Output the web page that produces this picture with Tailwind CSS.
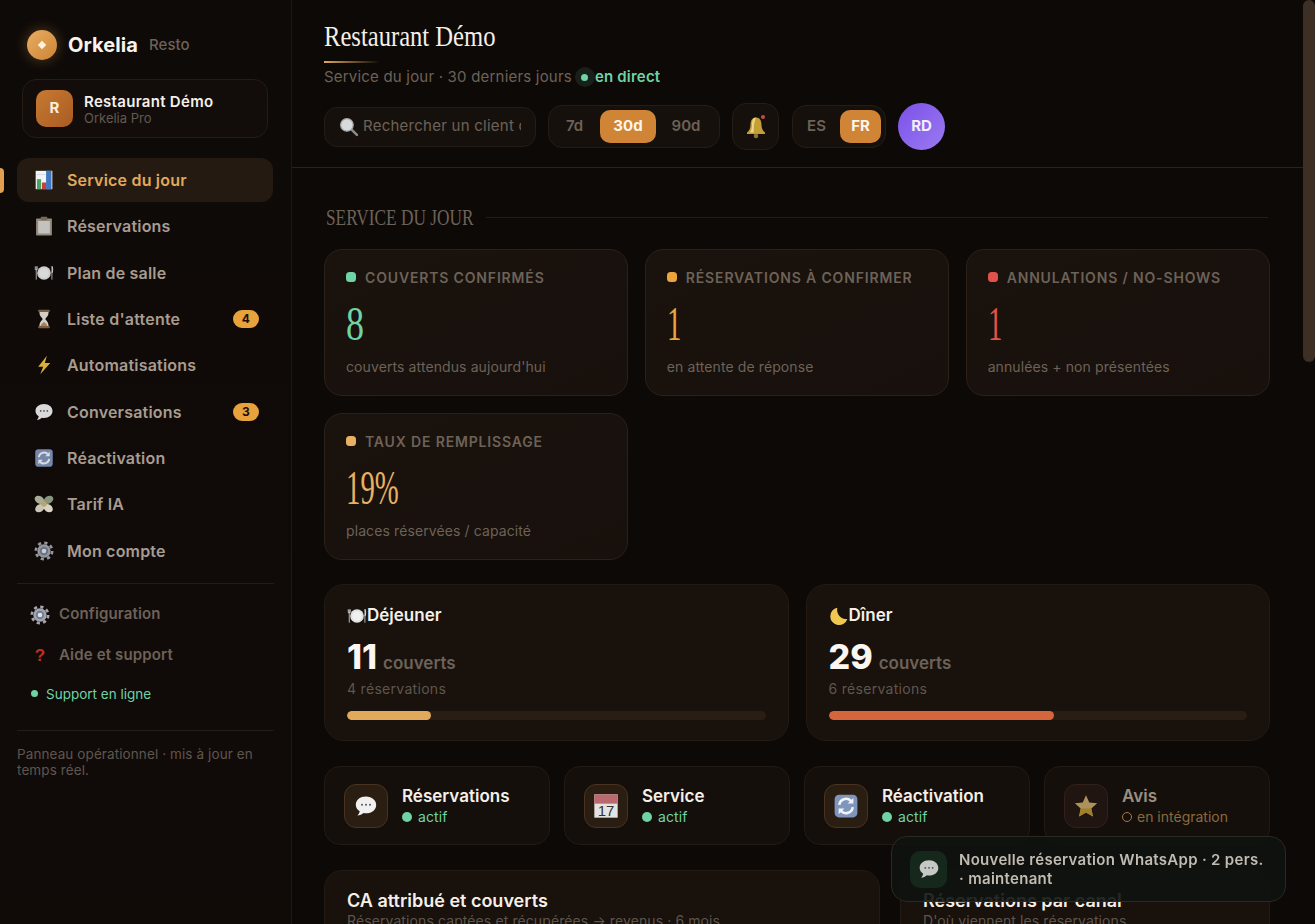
<!DOCTYPE html>
<html lang="fr">
<head>
<meta charset="UTF-8">
<meta name="viewport" content="width=device-width, initial-scale=1.0">
<title>Orkelia Resto</title>
<script src="https://cdn.jsdelivr.net/npm/@tailwindcss/browser@4"></script>
</head>
<body class="h-screen overflow-hidden flex bg-[#0d0906] font-['Inter',sans-serif] text-[#f5efe8]">

<!-- shared icons -->
<svg class="hidden">
  <symbol id="i-chart" viewBox="0 0 24 24"><rect x="2" y="1" width="20" height="22" fill="#f1f3f5"/><rect x="14.5" y="1" width="6.5" height="22" fill="#3f78c4"/><rect x="3.5" y="11" width="5" height="12" fill="#4aa564"/><rect x="9.5" y="15" width="5" height="8" fill="#c9403a"/><rect x="15.5" y="5" width="4.500" height="18" fill="#3f78c4"/><rect x="3.500" y="5" width="10" height="1" fill="#cfd6de"/></symbol>
  <symbol id="i-clip" viewBox="0 0 24 24"><rect x="2.500" y="3" width="19" height="20.500" rx="1" fill="#a5978a"/><rect x="5" y="6" width="14" height="15" fill="#d8d6d2"/><rect x="8" y="1" width="8" height="4" rx="1" fill="#837566"/></symbol>
  <symbol id="i-plate" viewBox="0 0 24 24"><circle cx="12" cy="12" r="8.200" fill="#e2e2e4"/><circle cx="12" cy="12" r="5.800" fill="#f0f0f1"/><path d="M1.500 4v4M2.700 4v16M3.900 4v4M1.500 8h2.400M21.500 4v16" stroke="#d8d8da" stroke-width="1" fill="none"/><path d="M21.500 4c1.200 1.500 1.200 6 0 8" stroke="#d8d8da" stroke-width="1.300" fill="none"/></symbol>
  <symbol id="i-glass" viewBox="0 0 24 24"><path d="M6.500 3.500h11c0 5-3 6.500-4 8.500 1 2 4 3.500 4 8.500h-11c0-5 3-6.500 4-8.500-1-2-4-3.500-4-8.500z" fill="#e9e4de"/><path d="M8 20.500c.5-2.500 2.500-4 4-5 1.500 1 3.500 2.500 4 5z" fill="#b98f61"/><rect x="5" y="1" width="14" height="2.600" rx="1" fill="#8b6848"/><rect x="5" y="20.400" width="14" height="2.600" rx="1" fill="#8b6848"/></symbol>
  <symbol id="i-bolt" viewBox="0 0 24 24"><path d="M15.500 1 5 14h6L7.500 23 19.500 9.500h-6.500z" fill="#f1c43f"/></symbol>
  <symbol id="i-chat" viewBox="0 0 24 24"><path d="M12 2.500C6.200 2.500 1.800 6 1.800 10.700c0 2.700 1.500 5 3.900 6.500-.3 1.600-1 3-2.200 4.300 2.300-.2 4.400-1.100 6-2.600.8.200 1.600.3 2.500.3 5.800 0 10.200-3.600 10.200-8.300S17.800 2.500 12 2.500z" fill="#f1f0f0"/><circle cx="8" cy="10.700" r="1" fill="#55565a"/><circle cx="12" cy="10.700" r="1" fill="#55565a"/><circle cx="16" cy="10.700" r="1" fill="#55565a"/></symbol>
  <symbol id="i-sync" viewBox="0 0 24 24"><rect x="1.500" y="1.500" width="21" height="21" rx="4" fill="#7f95bd"/><path d="M5.800 11a6.300 6.300 0 0 1 10.700-3.800" stroke="#f2f4f8" stroke-width="2.300" fill="none"/><path d="M18.800 4.500v5.300h-5.300z" fill="#f2f4f8"/><path d="M18.200 13a6.300 6.300 0 0 1-10.700 3.800" stroke="#f2f4f8" stroke-width="2.300" fill="none"/><path d="M5.200 19.500v-5.300h5.300z" fill="#f2f4f8"/></symbol>
  <symbol id="i-gear" viewBox="0 0 24 24"><circle cx="12" cy="12" r="9.800" fill="none" stroke="#a4a6ac" stroke-width="3.200" stroke-dasharray="3.850 3.850"/><circle cx="12" cy="12" r="8" fill="#a4a6ac"/><circle cx="12" cy="12" r="5" fill="#6f7d96"/><circle cx="12" cy="12" r="2.800" fill="#dfe2e8"/></symbol>
  <symbol id="i-wing" viewBox="0 0 24 24"><ellipse cx="6.500" cy="7" rx="6" ry="4.500" transform="rotate(30 6.500 7)" fill="#b9bea6"/><ellipse cx="17.500" cy="7" rx="6" ry="4.500" transform="rotate(-30 17.500 7)" fill="#98a58a"/><ellipse cx="7" cy="17" rx="6" ry="4.500" transform="rotate(-35 7 17)" fill="#dedbc9"/><ellipse cx="17" cy="17" rx="6" ry="4.500" transform="rotate(35 17 17)" fill="#efe9d8"/><circle cx="12" cy="12" r="3.200" fill="#c9b878"/></symbol>
  <symbol id="i-search" viewBox="0 0 24 24"><path d="m14.500 14.500 7 7" stroke="#8f8a84" stroke-width="3" stroke-linecap="round"/><circle cx="9.500" cy="9.500" r="7.500" fill="#d9dadc" stroke="#a9a9ab" stroke-width="1.500"/></symbol>
  <symbol id="i-bell" viewBox="0 0 24 24"><path d="M12 2.500c-4 0-5.500 3.500-5.500 7.500 0 3.500-1.500 6-3.500 7.500v1.500h18v-1.500c-2-1.500-3.500-4-3.500-7.500 0-4-1.500-7.500-5.500-7.500z" fill="#c49f38"/><path d="M12 2.500c-3 0-4 3.500-4 7.500 0 3.500-1 6-2 7.500h4c-.5-3-.5-9 2-15z" fill="#ecd882"/><circle cx="12" cy="21" r="2.300" fill="#8f7430"/></symbol>
  <symbol id="i-cal" viewBox="0 0 24 24"><rect x="2" y="2" width="20" height="20" fill="#e4e3e3"/><rect x="2" y="2" width="20" height="8" fill="#b96a6e"/></symbol>
  <symbol id="i-star" viewBox="0 0 24 24"><path d="m12 2 3 6.700 7.300.8-5.400 4.900 1.500 7.200L12 18l-6.400 3.600 1.500-7.200L1.700 9.500 9 8.700z" fill="#c4aa68"/><path d="M12 18l-6.400 3.600 1.500-7.200h9.800l1.500 7.200z" fill="#b9922f"/></symbol>
  <symbol id="i-moon" viewBox="0 0 24 24"><path d="M10 2a10.500 10.500 0 1 0 12 13.500A11 11 0 0 1 10 2z" fill="#f0c850"/></symbol>
</svg>

<!-- Sidebar -->
<aside class="w-[292px] shrink-0 h-full border-r border-[#1f1812] bg-gradient-to-b from-[#0e0a08] to-[#110b08] flex flex-col">
  <div class="h-[79px] pl-[27px] pt-[30px] flex items-start">
    <div class="w-[30px] h-[30px] rounded-full bg-gradient-to-br from-[#e8ad62] to-[#cc8436] shadow-[0_0_14px_rgba(224,160,80,0.35)] flex items-center justify-center"><span class="w-[6px] h-[6px] rotate-45 bg-[#fdf1dd]"></span></div>
    <span class="ml-[11px] text-[20px] leading-[30px] font-bold tracking-[.1px] text-[#f8f3ec]">Orkelia</span>
    <span class="ml-[11px] text-[15px] leading-[30px] font-medium text-[#6d6258]">Resto</span>
  </div>
  <div class="mx-[22px] h-[59px] w-[246px] rounded-[14px] border border-[#241c15] bg-[#120d0a] flex items-center pl-[13px] gap-[11px]">
    <div class="w-[37px] h-[37px] rounded-[10px] bg-gradient-to-br from-[#c87a32] to-[#a85c22] flex items-center justify-center text-[15px] font-bold text-[#fbeedd]">R</div>
    <div class="pt-[1px]">
      <div class="text-[15px] leading-[17px] font-semibold tracking-[.3px] text-[#f5efe8]">Restaurant Démo</div>
      <div class="text-[13px] leading-[16px] text-[#625950]">Orkelia Pro</div>
    </div>
  </div>

  <nav class="relative mt-[20px] mx-[17px] w-[256px] flex flex-col gap-[2.330px] text-[16px] font-semibold tracking-[.2px] text-[#a89c90]">
    <div class="absolute -left-[17px] top-[10px] w-[4px] h-[25px] rounded-r bg-[#e0a050]"></div>
    <a class="h-[44px] rounded-[12px] bg-[#241a12] flex items-center pl-[17px] gap-[13px] text-[#e0a95c]"><svg class="w-[20px] h-[20px]"><use href="#i-chart"/></svg>Service du jour</a>
    <a class="h-[44px] flex items-center pl-[17px] gap-[13px]"><svg class="w-[20px] h-[20px] opacity-90"><use href="#i-clip"/></svg>Réservations</a>
    <a class="h-[44px] flex items-center pl-[17px] gap-[13px]"><svg class="w-[20px] h-[20px] opacity-90"><use href="#i-plate"/></svg>Plan de salle</a>
    <a class="h-[44px] flex items-center pl-[17px] gap-[13px]"><svg class="w-[20px] h-[20px] opacity-90"><use href="#i-glass"/></svg>Liste d'attente<span class="ml-auto mr-[14px] w-[26px] h-[18px] rounded-full bg-[#e8a23c] flex items-center justify-center text-[12px] font-bold text-[#1a1008]">4</span></a>
    <a class="h-[44px] flex items-center pl-[17px] gap-[13px]"><svg class="w-[20px] h-[20px] opacity-90"><use href="#i-bolt"/></svg>Automatisations</a>
    <a class="h-[44px] flex items-center pl-[17px] gap-[13px]"><svg class="w-[20px] h-[20px] opacity-90"><use href="#i-chat"/></svg>Conversations<span class="ml-auto mr-[14px] w-[26px] h-[18px] rounded-full bg-[#e8a23c] flex items-center justify-center text-[12px] font-bold text-[#1a1008]">3</span></a>
    <a class="h-[44px] flex items-center pl-[17px] gap-[13px]"><svg class="w-[20px] h-[20px] opacity-90"><use href="#i-sync"/></svg>Réactivation</a>
    <a class="h-[44px] flex items-center pl-[17px] gap-[13px]"><svg class="w-[20px] h-[20px] opacity-90"><use href="#i-wing"/></svg>Tarif IA</a>
    <a class="h-[44px] flex items-center pl-[17px] gap-[13px]"><svg class="w-[20px] h-[20px] opacity-90"><use href="#i-gear"/></svg>Mon compte</a>
  </nav>

  <div class="mx-[17px] mt-[10px] border-t border-[#241c15] pl-[13px] text-[15px] font-semibold tracking-[.15px] text-[#6d6258]">
    <div class="mt-[21px] h-[20px] flex items-center gap-[9px]"><svg class="w-[20px] h-[20px]"><use href="#i-gear"/></svg>Configuration</div>
    <div class="mt-[21px] h-[20px] flex items-center gap-[9px]"><span class="w-[20px] text-center text-[17px] font-bold text-[#c22f22] font-['Liberation_Sans',sans-serif]">?</span>Aide et support</div>
    <div class="mt-[18px] h-[20px] flex items-center gap-[8px] text-[13.500px] font-normal tracking-normal text-[#6fd3a5]"><span class="w-[7px] h-[7px] ml-[1px] rounded-full bg-[#6fd3a5]"></span>Support en ligne</div>
  </div>
  <div class="mx-[17px] mt-[26px] pt-[15px] border-t border-[#241c15] text-[13.500px] leading-[16px] tracking-[.1px] text-[#5f564d]">Panneau opérationnel · mis à jour en temps réel.</div>
</aside>

<!-- Main -->
<main class="flex-1 min-w-0 h-full overflow-hidden flex flex-col">
  <header class="h-[168px] shrink-0 border-b border-[#2b231b] pl-[32px]">
    <div class="pt-[19px] h-[60px]">
      <h1 class="font-['Liberation_Serif',serif] text-[30px] leading-[34px] text-[#f5efe8] inline-block origin-left scale-x-[.82] whitespace-nowrap">Restaurant Démo</h1>
      <div class="mt-[8px] w-[56px] h-[2px] bg-gradient-to-r from-[#e0a95c] to-transparent"></div>
    </div>
    <div class="mt-[7px] h-[20px] flex items-center text-[15px] tracking-[.2px] text-[#6d6258]">Service du jour · 30 derniers jours
      <span class="ml-[3px] w-[20px] h-[20px] rounded-full bg-[#182019] flex items-center justify-center"><span class="w-[7px] h-[7px] rounded-full bg-[#6fd3a5]"></span></span>
      <span class="font-semibold text-[#6fd3a5]">en direct</span>
    </div>
    <div class="mt-[16px] flex items-center h-[47px]">
      <div class="w-[212px] h-[40px] rounded-[13px] border border-[#241c15] bg-[#16100c] flex items-center pl-[14px] pr-[14px]">
        <svg class="w-[20px] h-[20px] shrink-0"><use href="#i-search"/></svg>
        <input type="text" placeholder="Rechercher un client ou un numéro" class="ml-[4px] min-w-0 flex-1 bg-transparent outline-none text-[15px] tracking-[.25px] placeholder:text-[#6d6258]">
      </div>
      <div class="ml-[12px] w-[172px] h-[43px] rounded-[14px] border border-[#241c15] bg-[#16100c] flex items-center pl-[4px] text-[15px] font-semibold text-[#6d6258]">
        <span class="w-[47px] pr-[4px] text-center">7d</span>
        <span class="w-[56px] h-[33px] rounded-[10px] bg-[#cf8436] flex items-center justify-center text-[#fdf6ec] font-bold">30d</span>
        <span class="w-[60px] text-center">90d</span>
      </div>
      <div class="ml-[12px] relative w-[47px] h-[47px] rounded-[14px] border border-[#241c15] bg-[#16100c] flex items-center justify-center">
        <svg class="w-[24px] h-[24px]"><use href="#i-bell"/></svg>
        <span class="absolute top-[11px] right-[13px] w-[4px] h-[4px] rounded-full bg-[#c8484a]"></span>
      </div>
      <div class="ml-[13px] w-[94px] h-[43px] rounded-[14px] border border-[#241c15] bg-[#16100c] flex items-center pl-[4px] text-[15px] font-semibold text-[#6d6258]">
        <span class="w-[43px] pr-[4px] text-center">ES</span>
        <span class="w-[41px] h-[33px] rounded-[10px] bg-[#cf8436] flex items-center justify-center text-[#fdf6ec] font-bold">FR</span>
      </div>
      <div class="ml-[12px] w-[47px] h-[47px] rounded-full bg-gradient-to-br from-[#7c4fe8] to-[#9a7af0] flex items-center justify-center text-[15px] font-bold text-[#f3edff]">RD</div>
    </div>
  </header>

  <section class="pl-[32px] pr-[33px] pt-[37px]">
    <div class="h-[24px] flex items-center">
      <h2 class="ml-[2px] w-[148px] shrink-0 font-['Liberation_Serif',serif] text-[24px] leading-[24px] text-[#6d6258] origin-left scale-x-[.72] whitespace-nowrap">SERVICE DU JOUR</h2>
      <div class="ml-[12px] mr-[2px] flex-1 h-[1px] bg-[#241c15]"></div>
    </div>

    <div class="mt-[20px] grid grid-cols-3 gap-x-[16.500px] gap-y-[17px]">
      <div class="h-[147px] rounded-[18px] border border-[#2b2118] bg-gradient-to-br from-[#19120d] to-[#17100c] pt-[19px] px-[21px]">
        <div class="h-[16px] flex items-center gap-[9px] text-[14px] font-semibold tracking-[.06em] text-[#6d6258] whitespace-nowrap"><span class="w-[10px] h-[10px] rounded-[3.500px] bg-[#6fd3a5]"></span>COUVERTS CONFIRMÉS</div>
        <div class="mt-[15px] h-[48px] font-['Liberation_Serif',serif] text-[48px] leading-[48px] text-[#6fd3a5] origin-left scale-x-[.75]">8</div>
        <div class="mt-[8px] text-[14px] tracking-[.1px] text-[#6d6258]">couverts attendus aujourd'hui</div>
      </div>
      <div class="h-[147px] rounded-[18px] border border-[#2b2118] bg-gradient-to-br from-[#19120d] to-[#17100c] pt-[19px] px-[21px]">
        <div class="h-[16px] flex items-center gap-[9px] text-[14px] font-semibold tracking-[.06em] text-[#6d6258] whitespace-nowrap"><span class="w-[10px] h-[10px] rounded-[3.500px] bg-[#eba53c]"></span>RÉSERVATIONS À CONFIRMER</div>
        <div class="mt-[15px] h-[48px] font-['Liberation_Serif',serif] text-[48px] leading-[48px] text-[#eba53c] origin-left scale-x-[.6]">1</div>
        <div class="mt-[8px] text-[14px] tracking-[.1px] text-[#6d6258]">en attente de réponse</div>
      </div>
      <div class="h-[147px] rounded-[18px] border border-[#2b2118] bg-gradient-to-br from-[#19120d] to-[#17100c] pt-[19px] px-[21px]">
        <div class="h-[16px] flex items-center gap-[9px] text-[14px] font-semibold tracking-[.06em] text-[#6d6258] whitespace-nowrap"><span class="w-[10px] h-[10px] rounded-[3.500px] bg-[#e0524a]"></span>ANNULATIONS / NO-SHOWS</div>
        <div class="mt-[15px] h-[48px] font-['Liberation_Serif',serif] text-[48px] leading-[48px] text-[#e0524a] origin-left scale-x-[.6]">1</div>
        <div class="mt-[8px] text-[14px] tracking-[.1px] text-[#6d6258]">annulées + non présentées</div>
      </div>
      <div class="h-[147px] rounded-[18px] border border-[#2b2118] bg-gradient-to-br from-[#19120d] to-[#17100c] pt-[19px] px-[21px]">
        <div class="h-[16px] flex items-center gap-[9px] text-[14px] font-semibold tracking-[.06em] text-[#6d6258] whitespace-nowrap"><span class="w-[10px] h-[10px] rounded-[3.500px] bg-[#e8b060]"></span>TAUX DE REMPLISSAGE</div>
        <div class="mt-[15px] h-[48px] font-['Liberation_Serif',serif] text-[48px] leading-[48px] text-[#e8b060] origin-left scale-x-[.6]">19%</div>
        <div class="mt-[8px] text-[14px] tracking-[.1px] text-[#6d6258]">places réservées / capacité</div>
      </div>
    </div>

    <div class="mt-[24px] grid grid-cols-2 gap-[17px]">
      <div class="h-[157px] rounded-[20px] border border-[#221a13] bg-[#18110c] pt-[21px] px-[22px]">
        <div class="h-[20px] flex items-center text-[17px] font-semibold text-[#f5efe8]"><svg class="w-[20px] h-[20px]"><use href="#i-plate"/></svg>Déjeuner</div>
        <div class="mt-[13px] h-[36px] flex items-baseline gap-[6px]"><span class="text-[34px] leading-[36px] font-extrabold text-[#fbf6ef]">11</span><span class="text-[17px] font-semibold text-[#6d6258]">couverts</span></div>
        <div class="mt-[4px] h-[20px] text-[14px] leading-[20px] text-[#5f564d] tracking-[.3px]">4 réservations</div>
        <div class="mt-[12px] h-[9px] rounded-full bg-[#2a1d14] overflow-hidden"><div class="h-full rounded-full bg-[#e0a95c]" style="width:20%"></div></div>
      </div>
      <div class="h-[157px] rounded-[20px] border border-[#221a13] bg-[#18110c] pt-[21px] px-[22px]">
        <div class="h-[20px] flex items-center text-[17px] font-semibold text-[#f5efe8]"><svg class="w-[20px] h-[20px]"><use href="#i-moon"/></svg>Dîner</div>
        <div class="mt-[13px] h-[36px] flex items-baseline gap-[6px]"><span class="text-[34px] leading-[36px] font-extrabold text-[#fbf6ef]">29</span><span class="text-[17px] font-semibold text-[#6d6258]">couverts</span></div>
        <div class="mt-[4px] h-[20px] text-[14px] leading-[20px] text-[#5f564d] tracking-[.3px]">6 réservations</div>
        <div class="mt-[12px] h-[9px] rounded-full bg-[#2a1d14] overflow-hidden"><div class="h-full rounded-full bg-[#d4653c]" style="width:54%"></div></div>
      </div>
    </div>

    <div class="mt-[25px] grid grid-cols-4 gap-[14px]">
      <div class="h-[79px] rounded-[16px] border border-[#221a13] bg-[#150f0b] flex items-center pl-[19px] gap-[14px]">
        <div class="w-[44px] h-[44px] rounded-[12px] border border-[#4a3320] bg-[#2a1d12] flex items-center justify-center"><svg class="w-[24px] h-[24px]"><use href="#i-chat"/></svg></div>
        <div><div class="text-[17px] leading-[22px] font-semibold text-[#f5efe8]">Réservations</div><div class="h-[20px] flex items-center gap-[6px] text-[14px] tracking-[.1px] text-[#6fd3a5]"><span class="w-[10px] h-[10px] rounded-full bg-[#6fd3a5]"></span>actif</div></div>
      </div>
      <div class="h-[79px] rounded-[16px] border border-[#221a13] bg-[#150f0b] flex items-center pl-[19px] gap-[14px]">
        <div class="relative w-[44px] h-[44px] rounded-[12px] border border-[#4a3320] bg-[#2a1d12] flex items-center justify-center"><svg class="w-[28px] h-[28px]"><use href="#i-cal"/></svg><span class="absolute left-0 right-0 top-[17px] text-center text-[15px] leading-[18px] font-['Liberation_Sans',sans-serif] text-[#333]">17</span></div>
        <div><div class="text-[17px] leading-[22px] font-semibold text-[#f5efe8]">Service</div><div class="h-[20px] flex items-center gap-[6px] text-[14px] tracking-[.1px] text-[#6fd3a5]"><span class="w-[10px] h-[10px] rounded-full bg-[#6fd3a5]"></span>actif</div></div>
      </div>
      <div class="h-[79px] rounded-[16px] border border-[#221a13] bg-[#150f0b] flex items-center pl-[19px] gap-[14px]">
        <div class="w-[44px] h-[44px] rounded-[12px] border border-[#4a3320] bg-[#2a1d12] flex items-center justify-center"><svg class="w-[26px] h-[26px]"><use href="#i-sync"/></svg></div>
        <div><div class="text-[17px] leading-[22px] font-semibold text-[#f5efe8]">Réactivation</div><div class="h-[20px] flex items-center gap-[6px] text-[14px] tracking-[.1px] text-[#6fd3a5]"><span class="w-[10px] h-[10px] rounded-full bg-[#6fd3a5]"></span>actif</div></div>
      </div>
      <div class="h-[79px] rounded-[16px] border border-[#221a13] bg-[#150f0b] flex items-center pl-[19px] gap-[14px]">
        <div class="w-[44px] h-[44px] rounded-[12px] border border-[#33201c] bg-[#211512] flex items-center justify-center"><svg class="w-[26px] h-[26px] opacity-85"><use href="#i-star"/></svg></div>
        <div><div class="text-[17px] leading-[22px] font-semibold text-[#9a8f84]">Avis</div><div class="h-[20px] flex items-center gap-[5px] text-[14px] text-[#8a6a3c]"><span class="w-[10px] h-[10px] rounded-full border border-[#a57c40]"></span>en intégration</div></div>
      </div>
    </div>

    <div class="mt-[25px] flex gap-[20px]">
      <div class="w-[556px] h-[120px] rounded-[18px] border border-[#221a13] bg-[#18110c] pt-[19px] px-[22px]">
        <div class="text-[18px] leading-[22px] font-semibold text-[#f5efe8]">CA attribué et couverts</div>
        <div class="text-[14px] leading-[18px] tracking-[.1px] text-[#5f564d]">Réservations captées et récupérées → revenus · 6 mois</div>
      </div>
      <div class="w-[370px] h-[120px] rounded-[18px] border border-[#221a13] bg-[#18110c] pt-[19px] px-[22px]">
        <div class="text-[18px] leading-[22px] font-semibold text-[#f5efe8]">Réservations par canal</div>
        <div class="text-[14px] leading-[18px] tracking-[.1px] text-[#5f564d]">D'où viennent les réservations</div>
      </div>
    </div>
  </section>
</main>

<!-- Scrollbar -->
<div class="w-[12px] shrink-0 h-full bg-[#0d0906]"><div class="h-[362px] rounded-full bg-[#3d2f24]"></div></div>

<!-- Toast -->
<div class="fixed right-[29px] bottom-[22px] w-[395px] h-[66px] rounded-[16px] border border-[#2a2a20] bg-[#0e130f]/90 flex items-center pl-[18px] pr-[16px] gap-[12px]">
  <div class="w-[37px] h-[37px] shrink-0 rounded-[10px] bg-[#16281c] flex items-center justify-center"><svg class="w-[22px] h-[22px] opacity-80"><use href="#i-chat"/></svg></div>
  <div class="text-[15px] leading-[19px] font-semibold tracking-[.3px] text-[#c2bbb1]">Nouvelle réservation WhatsApp · 2 pers. · maintenant</div>
</div>
</body>
</html>
